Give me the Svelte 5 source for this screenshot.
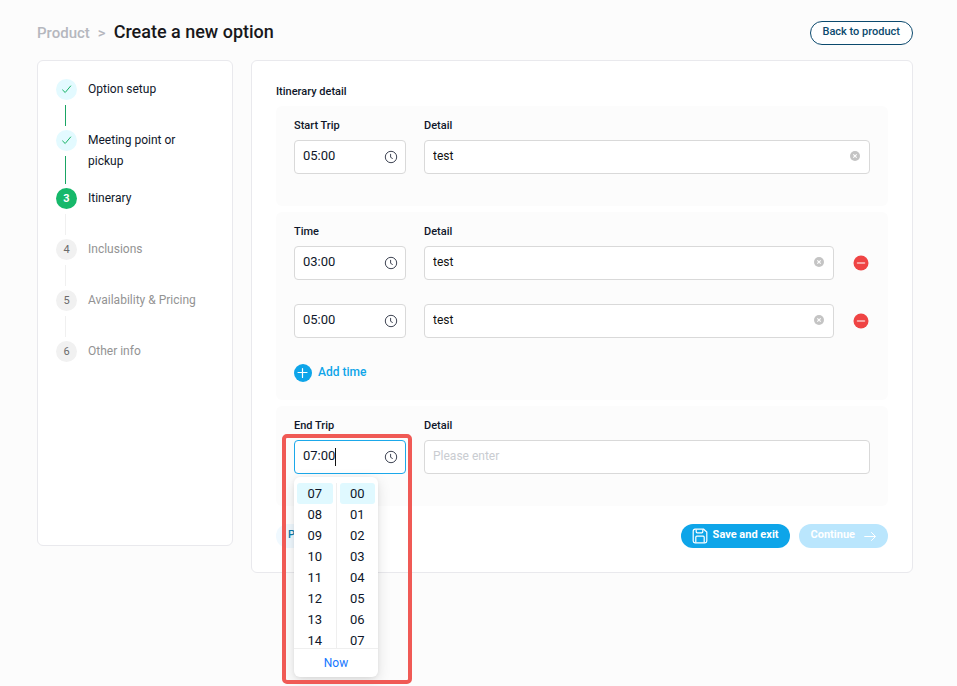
<script>
  const steps = [
    { label: 'Option setup', state: 'done' },
    { label: 'Meeting point or pickup', state: 'done' },
    { label: 'Itinerary', state: 'current' },
    { label: 'Inclusions', state: 'todo' },
    { label: 'Availability & Pricing', state: 'todo' },
    { label: 'Other info', state: 'todo' }
  ];

  let start = $state({ time: '05:00', detail: 'test' });
  let stops = $state([
    { time: '03:00', detail: 'test' },
    { time: '05:00', detail: 'test' }
  ]);
  let end = $state({ time: '07:00', detail: '' });

  const hours = ['07', '08', '09', '10', '11', '12', '13', '14'];
  const minutes = ['00', '01', '02', '03', '04', '05', '06', '07'];

  const hour = $derived(end.time.slice(0, 2));
  const minute = $derived(end.time.slice(3));

  function setNow() {
    end.time = new Date().toTimeString().slice(0, 5);
  }
</script>

{#snippet timeField(item, id, label, active)}
  <div class="time-field" class:active>
    <input {id} type="text" aria-label={label} bind:value={item.time} />
    {#if active}<span class="caret"></span>{/if}
    <svg class="clock" viewBox="0 0 14 14" aria-hidden="true">
      <circle cx="7" cy="7" r="5.7" />
      <path d="M6.6 3.9v3.4l2.1 1.3" />
    </svg>
  </div>
{/snippet}

{#snippet detailField(item, id, label)}
  <div class="detail-field">
    <input {id} type="text" aria-label={label} placeholder="Please enter" bind:value={item.detail} />
    {#if item.detail}
      <button class="clear" aria-label="Clear" onclick={() => (item.detail = '')}>
        <svg viewBox="0 0 10 10" aria-hidden="true">
          <circle cx="5" cy="5" r="5" fill="#c4c4c4" />
          <path d="M3.3 3.3l3.4 3.4M6.7 3.3L3.3 6.7" stroke="#fff" stroke-width="1.1" />
        </svg>
      </button>
    {/if}
  </div>
{/snippet}

<div class="page">
  <header>
    <nav aria-label="Breadcrumb">
      <a href="#product">Product</a>
      <span class="chevron">&gt;</span>
      <h1>Create a new option</h1>
    </nav>
    <button class="pill outline">Back to product</button>
  </header>

  <div class="columns">
    <aside>
      <ol class="steps">
        {#each steps as step, i}
          <li class={step.state}>
            <div class="rail">
              <span class="marker">
                {#if step.state === 'done'}
                  <svg viewBox="0 0 12 12" aria-hidden="true"><path d="M1.3 5.7l2.9 2.8 5.7-6.8" /></svg>
                {:else}
                  {i + 1}
                {/if}
              </span>
              {#if i < steps.length - 1}<span class="line"></span>{/if}
            </div>
            <span class="step-label">{step.label}</span>
          </li>
        {/each}
      </ol>
    </aside>

    <main>
      <h2>Itinerary detail</h2>

      <section>
        <div class="row labels">
          <label class="time-col" for="start-time">Start Trip</label>
          <label for="start-detail">Detail</label>
        </div>
        <div class="row">
          {@render timeField(start, 'start-time', 'Start Trip', false)}
          {@render detailField(start, 'start-detail', 'Detail')}
        </div>
      </section>

      <section class="stops">
        <div class="row labels">
          <label class="time-col" for="stop-time-0">Time</label>
          <label for="stop-detail-0">Detail</label>
        </div>
        <div class="rows">
          {#each stops as stop, i}
            <div class="row">
              {@render timeField(stop, `stop-time-${i}`, 'Time', false)}
              {@render detailField(stop, `stop-detail-${i}`, 'Detail')}
              <button class="remove" aria-label="Remove time" onclick={() => stops.splice(i, 1)}>
                <svg viewBox="0 0 16 16" aria-hidden="true">
                  <circle cx="8" cy="8" r="7.5" fill="#ef4444" />
                  <path d="M4.5 8h7" stroke="#fbc4c4" stroke-width="1.5" stroke-linecap="round" />
                </svg>
              </button>
            </div>
          {/each}
        </div>
        <button class="add" onclick={() => stops.push({ time: '', detail: '' })}>
          <svg viewBox="0 0 18 18" aria-hidden="true">
            <circle cx="9" cy="9" r="9" fill="#0ea5e9" />
            <path d="M8.5 4.5v9M4 8.5h9" stroke="#fff" stroke-width="1.2" stroke-linecap="round" />
          </svg>
          Add time
        </button>
      </section>

      <section>
        <div class="row labels">
          <label class="time-col" for="end-time">End Trip</label>
          <label for="end-detail">Detail</label>
        </div>
        <div class="row">
          <div class="picker-anchor">
            {@render timeField(end, 'end-time', 'End Trip', true)}
            <div class="picker">
              <div class="lists">
                <ul>
                  {#each hours as h}
                    <li><button class:selected={h === hour} onclick={() => (end.time = `${h}:${minute}`)}>{h}</button></li>
                  {/each}
                </ul>
                <ul>
                  {#each minutes as m}
                    <li><button class:selected={m === minute} onclick={() => (end.time = `${hour}:${m}`)}>{m}</button></li>
                  {/each}
                </ul>
              </div>
              <button class="now" onclick={setNow}>Now</button>
            </div>
            <div class="highlight"></div>
          </div>
          {@render detailField(end, 'end-detail', 'Detail')}
        </div>
      </section>

      <footer>
        <button class="pill soft">Previous</button>
        <button class="pill primary">
          <svg viewBox="0 0 16 16" aria-hidden="true">
            <path d="M3 1.2h8.6L14.8 4v9a1.8 1.8 0 0 1-1.8 1.8H3A1.8 1.8 0 0 1 1.2 13V3A1.8 1.8 0 0 1 3 1.2z" />
            <path d="M4.2 1.4v2.4a1 1 0 0 0 1 1h4.6a1 1 0 0 0 1-1V1.4M3.8 14.6V9.2a1 1 0 0 1 1-1h6.4a1 1 0 0 1 1 1v5.4" />
          </svg>
          <span>Save and exit</span>
        </button>
        <button class="pill disabled" disabled>
          <span>Continue</span>
          <svg viewBox="0 0 12 12" aria-hidden="true"><path d="M.3 6.5h11.2M7.2 2.2l4.3 4.3-4.3 4.3" /></svg>
        </button>
      </footer>
    </main>
  </div>
</div>

<style>
  :global(body) {
    background: #fcfcfc;
  }

  .page {
    box-sizing: border-box;
    min-height: 100vh;
    padding: 0 44px 0 37px;
    font-family: Roboto, "Noto Sans", sans-serif;
    font-size: 12px;
    line-height: 21px;
    color: #0f172a;
  }

  .page *,
  .page *::before {
    box-sizing: border-box;
  }

  button,
  input {
    font: inherit;
    color: inherit;
    margin: 0;
    padding: 0;
    border: 0;
    background: none;
    outline: none;
  }

  button {
    cursor: pointer;
  }

  svg {
    display: block;
    flex: none;
    fill: none;
  }

  header {
    display: flex;
    align-items: center;
    justify-content: space-between;
    height: 60px;
    padding-top: 6px;
  }

  nav {
    display: flex;
    align-items: baseline;
    gap: 8px;
    padding-bottom: 2px;
    font-size: 15px;
    font-weight: 500;
    color: #b5b7be;
  }

  nav a {
    color: inherit;
    text-decoration: none;
  }

  h1 {
    margin: 0;
    font-size: 18px;
    font-weight: 500;
    line-height: 24px;
    color: #18181b;
  }

  .columns {
    display: flex;
    align-items: flex-start;
    gap: 18px;
  }

  aside,
  main {
    background: #fff;
    border: 1px solid #e9e9ed;
    border-radius: 6px;
  }

  aside {
    flex: none;
    width: 196px;
    min-height: 486px;
    padding: 18px;
  }

  main {
    flex: 1;
    min-width: 0;
    padding: 20px 24px 24px;
  }

  .steps,
  .picker ul {
    list-style: none;
    margin: 0;
    padding: 0;
  }

  .steps li {
    display: flex;
    gap: 11px;
    min-height: 51px;
  }

  .rail {
    display: flex;
    flex-direction: column;
    width: 21px;
    flex: none;
  }

  .marker {
    display: flex;
    align-items: center;
    justify-content: center;
    width: 21px;
    height: 21px;
    border-radius: 50%;
    background: #f1f1f1;
    color: #6b6b6b;
    font-size: 11px;
  }

  .done .marker {
    background: #e3faff;
  }

  .done svg {
    width: 12px;
    height: 12px;
    stroke: #16b364;
    stroke-width: 1;
  }

  .current .marker {
    background: #16b86a;
    color: #fff;
    font-weight: 700;
  }

  .line {
    flex: 1;
    width: 1px;
    margin: 5px 0 4px 9px;
    background: #f0f0f0;
  }

  .done .line {
    background: #1aa564;
  }

  .step-label {
    max-width: 116px;
    padding-bottom: 16px;
  }

  .todo .step-label {
    color: #939393;
  }

  h2 {
    margin: 0 0 4px;
    font-size: 11px;
    font-weight: 500;
  }

  section {
    min-height: 100px;
    padding: 9px 18px 0;
    margin-bottom: 6px;
    border-radius: 6px;
    background: #fcfcfc;
  }

  .stops {
    padding-bottom: 17px;
  }

  .row {
    display: flex;
    align-items: center;
    gap: 18px;
  }

  .labels {
    margin-bottom: 4px;
    font-size: 11px;
    font-weight: 500;
  }

  .time-col {
    width: 112px;
  }

  .rows {
    display: flex;
    flex-direction: column;
    gap: 24px;
  }

  .time-field,
  .detail-field {
    position: relative;
    display: flex;
    align-items: center;
    height: 34px;
    padding: 0 8px;
    border: 1px solid #d9d9d9;
    border-radius: 4px;
    background: #fff;
  }

  .time-field {
    width: 112px;
    flex: none;
    padding-right: 7px;
    font-size: 13px;
  }

  .time-field.active {
    border-color: #1ba8ea;
  }

  .detail-field {
    flex: 1;
    min-width: 0;
    padding: 0 9px 3px 8px;
    color: #111;
  }

  input {
    flex: 1;
    min-width: 0;
    height: 28px;
  }

  .time-field input {
    padding-bottom: 3px;
  }

  input::placeholder {
    color: #c9ccd1;
    opacity: 1;
  }

  .caret {
    position: absolute;
    left: 40px;
    top: 7px;
    width: 1px;
    height: 18px;
    background: #111;
  }

  .clock {
    width: 14px;
    height: 14px;
    stroke: #3f4554;
    stroke-width: 1;
  }

  .clear svg {
    width: 10px;
    height: 10px;
  }

  .remove {
    margin: 0 1px;
  }

  .remove svg {
    width: 16px;
    height: 16px;
  }

  .add {
    display: flex;
    align-items: center;
    gap: 6px;
    margin-top: 24px;
    color: #0ea5e9;
    font-weight: 500;
  }

  .add svg {
    width: 18px;
    height: 18px;
  }

  .picker-anchor {
    position: relative;
    flex: none;
  }

  .picker {
    position: absolute;
    z-index: 1;
    top: 37px;
    left: 0;
    width: 84px;
    padding-top: 6px;
    border-radius: 6px;
    background: #fff;
    box-shadow: 0 4px 14px rgb(0 0 0 / 12%), 0 1px 4px rgb(0 0 0 / 6%);
    font-size: 13px;
  }

  .lists {
    display: flex;
    height: 165px;
    overflow: hidden;
  }

  .picker ul {
    flex: 1;
    height: 165px;
    padding: 0 3px;
    overflow: hidden;
  }

  .picker ul + ul {
    border-left: 1px solid #efefef;
  }

  .picker li button {
    display: block;
    width: 100%;
    height: 21px;
    border-radius: 3px;
  }

  .picker li .selected {
    background: #e0f9ff;
  }

  .now {
    display: block;
    width: 100%;
    height: 29px;
    border-top: 1px solid #efefef;
    color: #1677ff;
    font-size: 12px;
  }

  .highlight {
    position: absolute;
    z-index: 2;
    inset: -6px -6px auto -12px;
    height: 250px;
    border: 4px solid #f05a55;
    border-radius: 5px;
    pointer-events: none;
  }

  footer {
    display: flex;
    gap: 9px;
    margin-top: 18px;
  }

  .pill {
    display: flex;
    align-items: center;
    justify-content: center;
    height: 24px;
    padding: 0 12px 2px;
    border-radius: 12px;
    font-size: 11px;
    font-weight: 500;
    line-height: 20px;
    white-space: nowrap;
  }

  .pill svg {
    stroke: #fff;
    stroke-width: 1;
  }

  .outline {
    border: 1px solid #0c4a6e;
    background: #fff;
    color: #0c4a6e;
  }

  .soft {
    margin-right: auto;
    background: #f0f9ff;
    color: #0c7cab;
  }

  .primary {
    gap: 5px;
    padding: 0 11px;
    background: #0ea5e9;
    color: #fff;
    font-weight: 700;
  }

  .primary svg {
    width: 16px;
    height: 16px;
    stroke-width: 1.2;
  }

  .disabled {
    gap: 9px;
    padding: 0 12px;
    background: #bae6fd;
    color: #fff;
    font-weight: 700;
    cursor: default;
  }

  .primary span,
  .disabled span {
    padding-bottom: 2px;
  }

  .disabled svg {
    width: 12px;
    height: 12px;
  }
</style>
